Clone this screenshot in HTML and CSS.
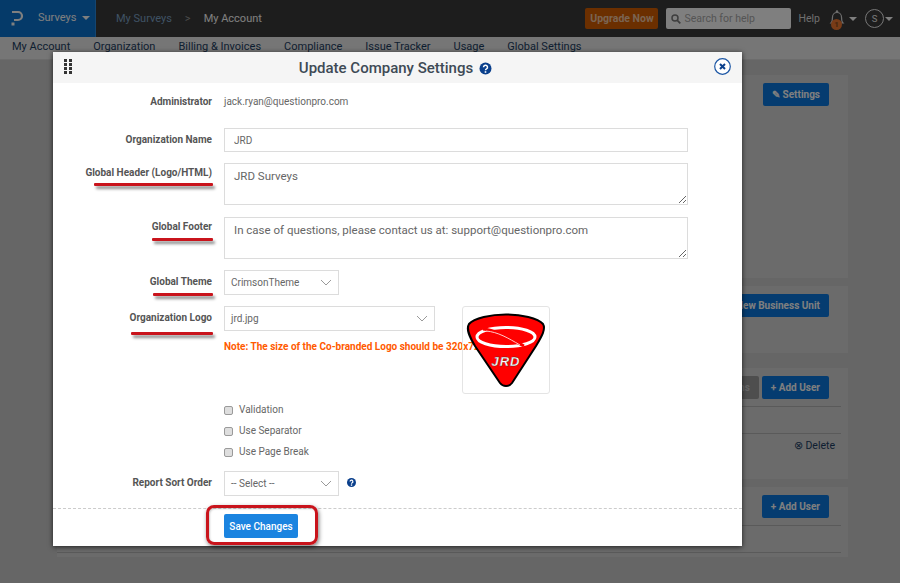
FILE: index.html
```html
<!DOCTYPE html>
<html lang="en">
<head>
<meta charset="utf-8">
<title>Update Company Settings</title>
<link rel="stylesheet" href="styles.css">
</head>
<body>
<div class="page">
  <header class="topbar">
    <div class="brand">
      <svg class="brand-logo" width="14" height="18" viewBox="0 0 14 18"><path d="M2 3h6a3.500 3.500 0 0 1 0 8H4" fill="none" stroke="#fff" stroke-width="2.200"/><rect x="1.500" y="13.500" width="3" height="3" fill="#fff"/></svg>
      <span class="brand-name">Surveys</span>
      <span class="caret caret-brand"></span>
    </div>
    <nav class="crumbs"><span class="crumb-dim">My Surveys</span><span class="crumb-sep">&gt;</span><span class="crumb-cur">My Account</span></nav>
    <div class="top-actions">
      <button class="upgrade">Upgrade Now</button>
      <div class="search">
        <svg width="10" height="10" viewBox="0 0 10 10"><circle cx="4" cy="4" r="3" fill="none" stroke="#7c7c7c" stroke-width="1.500"/><path d="M6.300 6.300L9.300 9.300" stroke="#7c7c7c" stroke-width="1.700"/></svg>
        <span>Search for help</span>
      </div>
      <span class="help">Help</span>
      <div class="bell">
        <svg width="16" height="20" viewBox="0 0 16 20"><path d="M2 14c1.500-1.500 1.500-3 1.500-6a4.500 4.500 0 0 1 9 0c0 3 0 4.500 1.500 6z" fill="none" stroke="#ddd" stroke-width="1.200"/><circle cx="8" cy="2.500" r="1.200" fill="#ddd"/></svg>
        <span class="bell-count">1</span>
      </div>
      <span class="caret"></span>
      <span class="avatar">S</span>
      <span class="caret"></span>
    </div>
  </header>
  <nav class="subnav">
    <a>My Account</a><a>Organization</a><a>Billing &amp; Invoices</a><a>Compliance</a><a>Issue Tracker</a><a>Usage</a><a>Global Settings</a>
  </nav>
  <main class="content">
    <section class="card card-a"><div class="card-head"><button class="bg-btn">&#9998; Settings</button></div></section>
    <section class="card card-b"><div class="card-head"><button class="bg-btn">New Business Unit</button></div></section>
    <section class="card card-c">
      <div class="card-head lined"><button class="bg-btn grey">Permissions</button><button class="bg-btn">+ Add User</button></div>
      <div class="card-row lined"></div>
      <div class="card-row del"><span>&#8855; Delete</span></div>
    </section>
    <section class="card card-d">
      <div class="card-head lined"><button class="bg-btn">+ Add User</button></div>
      <div class="card-row lined"></div>
    </section>
  </main>
</div>

<div class="overlay"></div>

<div class="modal">
  <div class="modal-head">
    <span class="grip"><i></i><i></i><i></i><i></i><i></i><i></i><i></i><i></i></span>
    <h1>Update Company Settings</h1>
    <svg class="title-help" width="13" height="13" viewBox="0 0 13 13"><circle cx="6.500" cy="6.500" r="6" fill="#0a3f8c"/><path d="M4.500 5.200a2 2 0 1 1 3 1.700c-.7.400-1 .7-1 1.400" fill="none" stroke="#fff" stroke-width="1.500"/><rect x="5.700" y="9.200" width="1.600" height="1.600" fill="#fff"/></svg>
    <svg class="close" width="17" height="17" viewBox="0 0 17 17"><circle cx="8.500" cy="8.500" r="7.800" fill="#fff" stroke="#1d57a5" stroke-width="1.200"/><path d="M6 6l5 5M11 6l-5 5" stroke="#0a3f8c" stroke-width="2"/></svg>
  </div>
  <form class="form">
    <div class="row row-admin"><label class="label">Administrator</label><span class="value">jack.ryan@questionpro.com</span></div>
    <div class="row row-name"><label class="label">Organization Name</label><input class="field wide" value="JRD"></div>
    <div class="row row-ta"><label class="label marked mark-header">Global Header (Logo/HTML)</label><textarea class="field wide area">JRD Surveys</textarea></div>
    <div class="row row-ta"><label class="label marked mark-footer">Global Footer</label><textarea class="field wide area">In case of questions, please contact us at: support@questionpro.com</textarea></div>
    <div class="row row-theme"><label class="label marked mark-theme">Global Theme</label>
      <div class="select small-sel">CrimsonTheme<svg width="12" height="7" viewBox="0 0 12 7"><path d="M1 1l5 5 5-5" fill="none" stroke="#9a9a9a"/></svg></div>
    </div>
    <div class="row row-logo">
      <label class="label marked mark-logo">Organization Logo</label>
      <div class="logo-col">
        <div class="select large-sel">jrd.jpg<svg width="12" height="7" viewBox="0 0 12 7"><path d="M1 1l5 5 5-5" fill="none" stroke="#9a9a9a"/></svg></div>
        <p class="note">Note: The size of the Co-branded Logo should be 320x72</p>
      </div>
      <div class="logo-box">
        <svg width="80" height="76" viewBox="0 0 80 76">
          <path d="M40 2.500C55 2.500 72 6 77 12 80 17 76 24 70 34L46 71C43 75 37 75 34 71L9 34C3 24 0 17 3 12 8 6 25 2.500 40 2.500Z" fill="#f00" stroke="#000" stroke-width="2"/>
          <ellipse cx="40" cy="25" rx="29" ry="9.500" fill="none" stroke="#fff" stroke-width="3"/>
          <path d="M17 17C32 18 46 28 58 34" fill="none" stroke="#f00" stroke-width="3"/>
          <path d="M20 19C32 20 42 26 54 33" fill="none" stroke="#ffc9c9" stroke-width="1"/>
          <text x="40" y="54" class="logo-text" text-anchor="middle">JRD</text>
        </svg>
      </div>
    </div>
    <div class="checks">
      <label class="check"><span class="box"></span>Validation</label>
      <label class="check"><span class="box"></span>Use Separator</label>
      <label class="check"><span class="box"></span>Use Page Break</label>
    </div>
    <div class="row row-sort"><label class="label">Report Sort Order</label>
      <div class="select small-sel">-- Select --<svg width="12" height="7" viewBox="0 0 12 7"><path d="M1 1l5 5 5-5" fill="none" stroke="#9a9a9a"/></svg></div>
      <svg class="sort-help" width="9" height="9" viewBox="0 0 13 13"><circle cx="6.500" cy="6.500" r="6.500" fill="#0a3f8c"/><path d="M4.500 5.200a2 2 0 1 1 3 1.700c-.7.400-1 .7-1 1.400" fill="none" stroke="#fff" stroke-width="1.800"/><rect x="5.500" y="9.200" width="2" height="2" fill="#fff"/></svg>
    </div>
    <div class="footer-bar">
      <span class="save-ring"></span>
      <button type="button" class="save">Save Changes</button>
    </div>
  </form>
</div>
</body>
</html>
```
FILE: styles.css
```css
* { box-sizing: border-box; }
html, body { margin: 0; height: 583px; overflow: hidden; }
body { font-family: Roboto, "Noto Sans", sans-serif; font-size: 10px; background: #fff; color: #555; position: relative; }
button { font-family: inherit; border: 0; }

.page { width: 900px; height: 583px; background: #cccccc; display: flex; flex-direction: column; }

.topbar { height: 37px; background: #3a3a3a; display: flex; align-items: center; flex: none; }
.brand { width: 96px; height: 37px; background: #0a74d2; border-right: 1px solid #2a8ae0; display: flex; align-items: center; padding: 0 0 2px 10px; color: #fff; flex: none; }
.brand-name { margin-left: 14px; font-size: 11px; }
.caret { display: inline-block; width: 0; height: 0; border: 4px solid transparent; border-top-color: #fff; border-bottom: 0; flex: none; }
.caret-brand { margin-left: 6px; }
.crumbs { margin-left: 20px; display: flex; gap: 13px; font-size: 11px; }
.crumb-dim { color: #7fa4c8; }
.crumb-sep { color: #9a9a9a; }
.crumb-cur { color: #ffffff; }
.top-actions { margin-left: auto; display: flex; align-items: center; height: 37px; padding-right: 7px; }
.upgrade { width: 73px; height: 21px; background: #d65e00; color: #f4c8a4; font-size: 10.500px; font-weight: 700; border-radius: 2px; padding: 0; }
.search { width: 125px; height: 21px; margin-left: 8px; background: #fff; border-radius: 2px; display: flex; align-items: center; gap: 3px; padding-left: 5px; color: #aaa; font-size: 10.500px; }
.help { margin-left: 7px; color: #ddd; font-size: 10.500px; }
.bell { position: relative; width: 16px; height: 20px; margin-left: 9px; margin-right: 4px; }
.bell-count { position: absolute; left: 2px; bottom: -1px; width: 11px; height: 11px; border-radius: 50%; background: #f07830; color: #8a4a1a; font-size: 8px; line-height: 11px; text-align: center; font-weight: 700; }
.avatar { width: 19px; height: 19px; border: 1px solid #eee; border-radius: 50%; margin-left: 8px; margin-right: 1px; text-align: center; line-height: 17px; color: #eee; font-size: 9.500px; flex: none; }

.subnav { height: 23px; background: #ececec; border-bottom: 1px solid #d8d8d8; display: flex; gap: 23px; padding: 3px 0 0 12px; flex: none; color: #1d3e63; font-size: 11px; }

.content { flex: 1; padding: 15px 0 0 57px; display: flex; flex-direction: column; }
.card { background: #d6d6d6; width: 791px; display: flex; flex-direction: column; flex: none; }
.card-a { height: 203px; }
.card-b { height: 67px; margin-top: 8px; }
.card-c { height: 111px; margin-top: 15px; }
.card-d { height: 70px; margin-top: 8px; }
.card-head { height: 39px; display: flex; justify-content: flex-end; align-items: center; gap: 3px; padding-right: 19px; flex: none; }
.lined { border-bottom: 1px solid #b4b4b4; margin-right: 7px; }
.card-head.lined { padding-right: 12px; }
.card-row { height: 27px; flex: none; }
.bg-btn { height: 23px; padding: 0 9px; border-radius: 2px; background: #0a78e0; color: #fff; font-size: 10px; font-weight: 700; white-space: nowrap; }
.bg-btn.grey { background: #9c9c9c; color: #ccc; }
.del { display: flex; justify-content: flex-end; padding: 5px 6px 0 0; color: #1d3e63; font-size: 10.500px; margin-right: 7px; }

.overlay { position: absolute; inset: 0; background: rgba(0, 0, 0, .5); }

.modal { position: absolute; left: 53px; top: 52px; width: 689px; height: 494px; background: #fff; box-shadow: 0 1px 5px rgba(0, 0, 0, .7); display: flex; flex-direction: column; }
.modal-head { height: 31px; background: #f5f5f5; display: flex; align-items: center; justify-content: center; gap: 6px; position: relative; flex: none; padding-right: 4px; }
.modal-head h1 { margin: 0; font-size: 15px; font-weight: 500; color: #3e4a55; }
.title-help { margin-top: 1px; }
.grip { position: absolute; left: 11px; top: 7px; width: 8px; display: grid; grid-template-columns: 3px 3px; gap: 1px 2px; }
.grip i { width: 3px; height: 3px; background: #333; display: block; }
.close { position: absolute; right: 11px; top: 6px; }

.form { flex: 1; display: flex; flex-direction: column; }
.row { display: flex; align-items: flex-start; flex: none; }
.label { width: 159px; margin-right: 12px; text-align: right; font-size: 10px; font-weight: 700; color: #555; flex: none; position: relative; }
.marked { display: block; }
.marked::after { content: ""; position: absolute; right: -1px; height: 3px; background: #c9141c; box-shadow: 2px 3px 3px rgba(0, 0, 0, .45); border-radius: 1px; }
.mark-header::after { width: 119px; bottom: -6px; }
.mark-footer::after { width: 61px; bottom: -7px; }
.mark-theme::after { width: 60px; bottom: -2px; }
.mark-logo::after { width: 82px; bottom: -5px; }
.row-admin { height: 45px; padding-top: 12px; line-height: 14px; }
.value { font-size: 10px; color: #666; }
.row-name { height: 35px; }
.row-name .label { line-height: 24px; }
.field { border: 1px solid #dcdcdc; outline: 0; font-family: inherit; font-size: 10px; color: #666; background: #fff; }
.wide { width: 464px; height: 24px; padding: 0 9px; flex: none; }
.row-ta { height: 54px; }
.row-ta .label { padding-top: 3px; line-height: 14px; }
.area { height: 42px; padding: 5px 9px; font-size: 11.500px; line-height: 14px; resize: vertical; }
.row-theme { height: 36px; margin-top: -1px; }
.row-theme .label, .row-sort .label, .row-logo .label { line-height: 24px; }
.select { height: 25px; border: 1px solid #dcdcdc; display: flex; align-items: center; justify-content: space-between; padding: 0 6px; font-size: 10px; color: #666; background: #fff; flex: none; }
.small-sel { width: 115px; }
.large-sel { width: 211px; }
.row-logo { height: 95px; }
.logo-col { width: 238px; flex: none; }
.note { margin: 10px 0 0; font-size: 10px; font-weight: 700; color: #ff5a00; white-space: nowrap; }
.logo-box { width: 88px; height: 88px; border: 1px solid #e4e4e4; border-radius: 3px; display: flex; align-items: center; justify-content: center; flex: none; }
.logo-text { font-family: "Liberation Sans", sans-serif; font-size: 13px; font-weight: 700; font-style: italic; fill: #fff; stroke: #333; stroke-width: .3px; letter-spacing: 1px; }

.checks { display: flex; flex-direction: column; gap: 7px; padding-left: 171px; margin-top: 1px; flex: none; }
.check { height: 14px; display: flex; align-items: center; gap: 6px; font-size: 10px; color: #666; }
.box { width: 9px; height: 9px; border: 1px solid #9a9a9a; background: #dedede; border-radius: 2px; margin-top: 3px; flex: none; }

.row-sort { margin-top: 13px; height: 37px; }
.sort-help { margin: 7px 0 0 8px; }

.footer-bar { border-top: 1px dashed #ccc; flex: 1; padding: 5px 0 0 171px; position: relative; }
.save { width: 74px; height: 24px; background: #1b84e0; color: #fff; font-size: 10px; font-weight: 500; border-radius: 2px; padding: 0; }
.save-ring { position: absolute; left: 153px; top: -4px; width: 112px; height: 40px; border: 3px solid #c9141c; border-radius: 8px; box-shadow: 1px 2px 4px rgba(0, 0, 0, .5), inset 1px 1px 2px rgba(0, 0, 0, .2); }
```
